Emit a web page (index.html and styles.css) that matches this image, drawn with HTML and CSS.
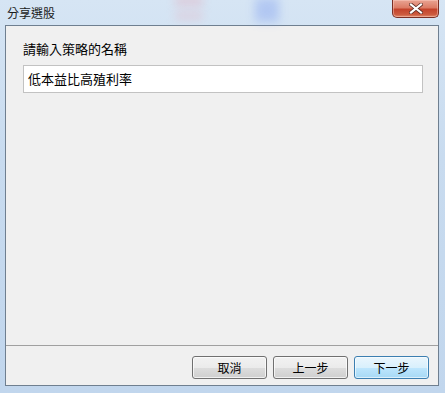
FILE: index.html
```html
<!DOCTYPE html>
<html lang="zh-Hant">
<head>
<meta charset="utf-8">
<title>分享選股</title>
<link rel="stylesheet" href="styles.css">
</head>
<body>
<div class="window">
  <div class="blur blur-pink"></div>
  <div class="blur blur-pink2"></div>
  <div class="blur blur-blue"></div>
  <div class="titlebar">
    <span class="title">分享選股</span>
    <button class="close" aria-label="關閉">
      <svg width="14" height="11" viewBox="0 0 14 11">
        <path d="M2 1.5 L12 9.5 M12 1.5 L2 9.5" stroke="#5a2a22" stroke-width="3.6" stroke-linecap="square"/>
        <path d="M2 1.5 L12 9.5 M12 1.5 L2 9.5" stroke="#ffffff" stroke-width="2.2" stroke-linecap="square"/>
      </svg>
    </button>
  </div>
  <div class="client">
    <div class="panel">
      <div class="label">請輸入策略的名稱</div>
      <div class="input">低本益比高殖利率</div>
    </div>
    <div class="footer">
      <button class="btn">取消</button>
      <button class="btn">上一步</button>
      <button class="btn btn-default">下一步</button>
    </div>
  </div>
</div>
</body>
</html>
```

FILE: styles.css
```css
* { box-sizing: border-box; }

html, body {
  margin: 0;
  padding: 0;
}

body {
  width: 445px;
  height: 393px;
  overflow: hidden;
  font-family: "Noto Sans CJK TC", "Noto Sans", "Liberation Sans", sans-serif;
  color: #000;
}

.window {
  position: relative;
  width: 445px;
  height: 393px;
  padding: 0 6px 7px 5px;
  display: flex;
  flex-direction: column;
  background: linear-gradient(to bottom, #d6e5f4 0%, #c8dbef 40%, #c1d6ed 100%);
  overflow: hidden;
}

.blur {
  position: absolute;
  filter: blur(5px);
  opacity: 0.4;
}
.blur-pink { left: 175px; top: -4px; width: 28px; height: 10px; background: #e7a6b6; }
.blur-pink2 { left: 175px; top: 12px; width: 28px; height: 8px; background: #e6b2c0; }
.blur-blue { left: 255px; top: -2px; width: 24px; height: 24px; background: #7f9ef0; }

.titlebar {
  position: relative;
  height: 25px;
  display: flex;
  justify-content: space-between;
  align-items: flex-start;
}

.title {
  margin-left: 2px;
  padding-top: 5px;
  font-size: 12px;
  line-height: 16px;
  color: #1b1b1b;
}

.close {
  width: 47px;
  height: 18px;
  margin: 0;
  padding: 0;
  border: 1px solid #7a2f24;
  border-top: none;
  border-radius: 0 0 5px 5px;
  background: linear-gradient(to bottom, #e9a493 0%, #dc7c66 45%, #c4432b 55%, #cc5a3e 85%, #e08a6a 100%);
  box-shadow: inset 0 0 0 1px rgba(255, 210, 200, 0.45);
  display: flex;
  align-items: center;
  justify-content: center;
}

.client {
  flex: 1;
  display: flex;
  flex-direction: column;
  background: #f0f0f0;
  border: 1px solid #6f7f90;
}

.panel {
  height: 320px;
  padding: 15px 15px 0 17px;
  border-bottom: 1px solid #a0a0a0;
}

.label {
  font-size: 13px;
  line-height: 16px;
}

.input {
  margin-top: 8px;
  width: 400px;
  height: 28px;
  padding: 0 4px;
  border: 1px solid #c2c2c2;
  background: #fff;
  font-size: 13px;
  line-height: 26px;
}

.footer {
  flex: 1;
  display: flex;
  justify-content: flex-end;
  align-items: flex-start;
  gap: 6px;
  padding: 10px 9px 0 0;
}

.btn {
  width: 75px;
  height: 23px;
  margin: 0;
  padding: 0;
  border: 1px solid #707070;
  border-radius: 3px;
  font-family: inherit;
  font-size: 12px;
  line-height: 20px;
  color: #000;
  background: linear-gradient(to bottom, #f2f2f2 0%, #ebebeb 50%, #dddddd 51%, #cfcfcf 100%);
  box-shadow: inset 0 0 0 1px rgba(255, 255, 255, 0.7);
}

.btn-default {
  border-color: #3c7fb1;
  background: linear-gradient(to bottom, #eaf6fd 0%, #d9f0fc 50%, #bee6fd 51%, #a7d9f5 100%);
  box-shadow: inset 0 0 0 1px rgba(255, 255, 255, 0.6);
}
```
